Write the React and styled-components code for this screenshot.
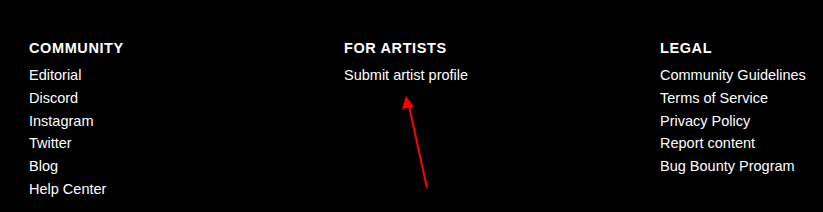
import React from "react";
import styled, { createGlobalStyle } from "styled-components";

const GlobalStyle = createGlobalStyle`
  html, body {
    margin: 0;
    padding: 0;
    background: #000;
  }
  body {
    font-family: "Liberation Sans", Arial, sans-serif;
  }
`;

const Footer = styled.footer`
  position: relative;
  width: 823px;
  height: 212px;
  background: #000;
  color: #fff;
  box-sizing: border-box;
  padding: 40px 0 0 29px;
  display: grid;
  grid-template-columns: 315px 316px auto;
  align-items: start;
`;

const Column = styled.div`
  display: flex;
  flex-direction: column;
`;

const Heading = styled.h4`
  margin: 0 0 7px;
  font-size: 14.5px;
  line-height: 17px;
  font-weight: 700;
  letter-spacing: 0.6px;
  text-transform: uppercase;
`;

const LinkList = styled.ul`
  list-style: none;
  margin: 0;
  padding: 0;
`;

const Item = styled.li`
  font-size: 14.5px;
  line-height: 22.8px;
`;

const Link = styled.a`
  color: #fff;
  text-decoration: none;
`;

// red annotation arrow drawn over the footer
const Arrow = styled.svg`
  position: absolute;
  left: 398px;
  top: 92px;
  width: 36px;
  height: 100px;
  pointer-events: none;
`;

const columns = [
  {
    title: "Community",
    links: ["Editorial", "Discord", "Instagram", "Twitter", "Blog", "Help Center"],
  },
  {
    title: "For Artists",
    links: ["Submit artist profile"],
  },
  {
    title: "Legal",
    links: [
      "Community Guidelines",
      "Terms of Service",
      "Privacy Policy",
      "Report content",
      "Bug Bounty Program",
    ],
  },
];

export default function App() {
  return (
    <>
      <GlobalStyle />
      <Footer>
        {columns.map((col) => (
          <Column key={col.title}>
            <Heading>{col.title}</Heading>
            <LinkList>
              {col.links.map((l) => (
                <Item key={l}>
                  <Link href="#">{l}</Link>
                </Item>
              ))}
            </LinkList>
          </Column>
        ))}
        <Arrow viewBox="0 0 36 100">
          <line x1="29" y1="96" x2="11" y2="14" stroke="#f00" strokeWidth="2" />
          <polygon points="8,4 4,17 16,15" fill="#f00" />
        </Arrow>
      </Footer>
    </>
  );
}
